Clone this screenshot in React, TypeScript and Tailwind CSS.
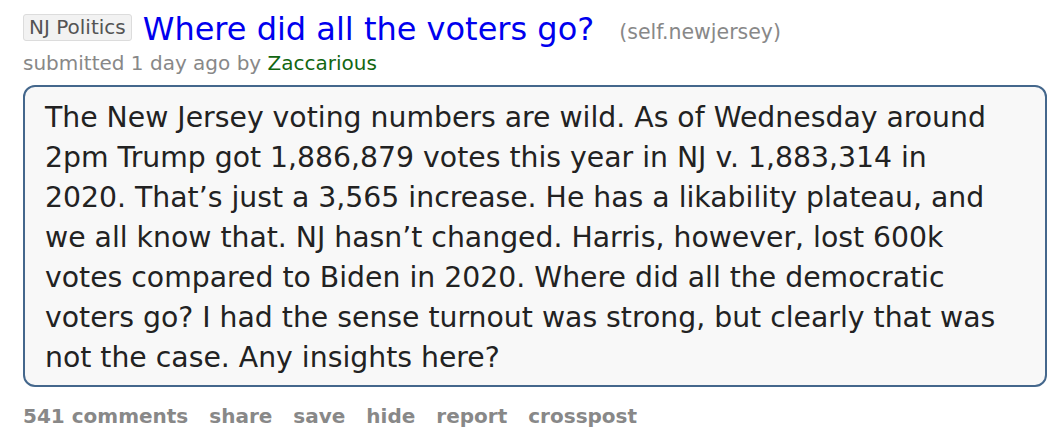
const bodyLines = [
  "The New Jersey voting numbers are wild. As of Wednesday around",
  "2pm Trump got 1,886,879 votes this year in NJ v. 1,883,314 in",
  "2020. That’s just a 3,565 increase. He has a likability plateau, and",
  "we all know that. NJ hasn’t changed. Harris, however, lost 600k",
  "votes compared to Biden in 2020. Where did all the democratic",
  "voters go? I had the sense turnout was strong, but clearly that was",
  "not the case. Any insights here?",
];

const actions = ["share", "save", "hide", "report", "crosspost"];

export default function App() {
  return (
    <div
      className="min-h-[444px] w-[1054px] bg-white pl-[23px] pr-[7px] pt-[11px]"
      style={{ fontFamily: '"DejaVu Sans", Verdana, sans-serif' }}
    >
      <div className="flex h-[36px] items-start">
        <span className="mt-[3px] h-[27px] rounded-[3px] border border-[#dcdcdc] bg-[#f2f2f2] px-[5px] text-[20px] leading-[25px] text-[#545454]">
          NJ Politics
        </span>
        <a className="ml-[11px] whitespace-nowrap text-[32px] leading-[36px] text-[#0000ee]">
          Where did all the voters go?
        </a>
        <span className="ml-[25px] mt-[7px] whitespace-nowrap text-[20.5px] leading-[29px] text-[#888]">
          (self.newjersey)
        </span>
      </div>
      <div className="mt-[4px] text-[20px] leading-[24px] text-[#888]">
        submitted 1 day ago by <span className="text-[#116611]">Zaccarious</span>
      </div>
      <div className="mt-[10px] rounded-[12px] border-2 border-[#44678c] bg-[#f8f8f8] px-[20px] pb-[7px] pt-[11px] text-[28.3px] leading-[40px] text-[#222]">
        {bodyLines.map((line) => (
          <div key={line} className="whitespace-nowrap">
            {line}
          </div>
        ))}
      </div>
      <div className="mt-[15px] flex gap-[21px] text-[20px] font-bold leading-[28px] text-[#888]">
        <span>541 comments</span>
        {actions.map((a) => (
          <span key={a}>{a}</span>
        ))}
      </div>
    </div>
  );
}
